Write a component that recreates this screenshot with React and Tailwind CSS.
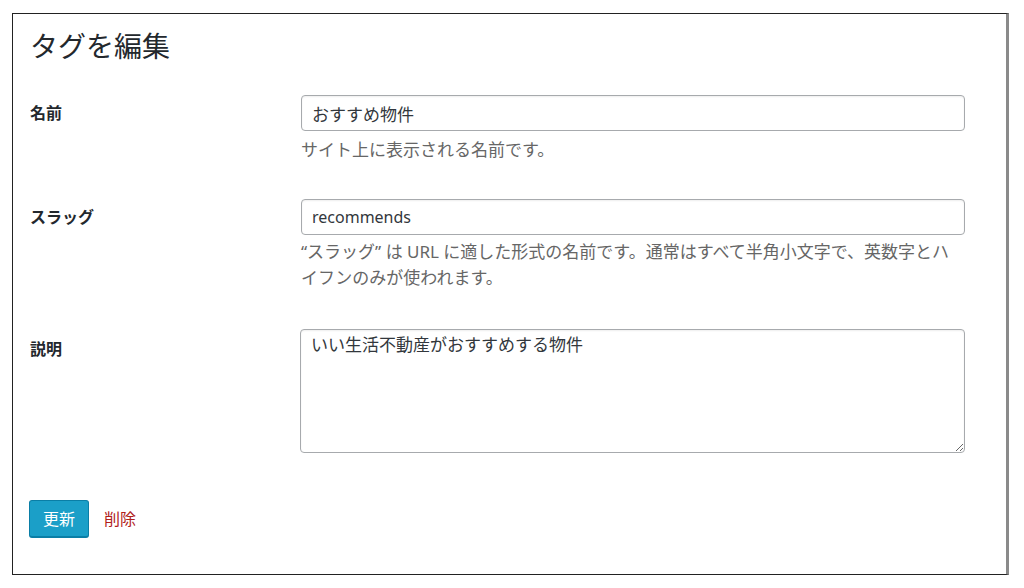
import React from "react";

const font = {
  fontFamily: '"Noto Sans", "Noto Sans CJK JP", sans-serif',
};

const Row = ({ label, children, labelClass = "" }) => (
  <div className="grid grid-cols-[271px_664px]">
    <div className={`text-[16px] font-bold text-[#23282d] ${labelClass}`}>
      {label}
    </div>
    <div>{children}</div>
  </div>
);

const App = () => {
  return (
    <div className="w-[1024px] h-[588px] bg-white pt-[13px] pl-[12px]" style={font}>
      <div className="w-[997px] h-[562px] border border-[#222] border-r-[3px] border-r-[#8a8a8a] pl-[17px]">
        <h1 className="mt-[14px] h-[36px] leading-[36px] text-[28px] font-normal text-[#23282d]">
          タグを編集
        </h1>

        <div className="mt-[31px]">
          <Row label="名前" labelClass="leading-[36px]">
            <input
              readOnly
              defaultValue="おすすめ物件"
              className="w-full h-[36px] px-[10px] rounded-[4px] border border-[#a7aaad] text-[17px] text-[#32373c] shadow-[inset_0_1px_2px_rgba(0,0,0,0.07)] outline-none"
            />
            <p className="mt-[6px] text-[17px] leading-[26px] text-[#666]">
              サイト上に表示される名前です。
            </p>
          </Row>
        </div>

        <div className="mt-[36px]">
          <Row label="スラッグ" labelClass="leading-[36px]">
            <input
              readOnly
              defaultValue="recommends"
              className="w-full h-[36px] px-[10px] rounded-[4px] border border-[#a7aaad] text-[16px] text-[#32373c] shadow-[inset_0_1px_2px_rgba(0,0,0,0.07)] outline-none"
            />
            <p className="mt-[4px] text-[17px] leading-[26px] text-[#666]">
              “スラッグ” は URL に適した形式の名前です。通常はすべて半角小文字で、英数字とハイフンのみが使われます。
            </p>
          </Row>
        </div>

        <div className="mt-[38px]">
          <Row label="説明" labelClass="pt-[8px] leading-[24px]">
            <textarea
              readOnly
              defaultValue="いい生活不動産がおすすめする物件"
              className="block -ml-[1px] w-[665px] h-[124px] px-[10px] py-[3px] rounded-[4px] border border-[#a7aaad] text-[17px] leading-[24px] text-[#32373c] shadow-[inset_0_1px_2px_rgba(0,0,0,0.07)] outline-none"
            />
          </Row>
        </div>

        <div className="mt-[47px] flex items-center gap-[15px]">
          <button className="-ml-[1px] w-[60px] h-[38px] rounded-[3px] bg-[#1b9fc8] border border-[#0a7ea6] border-b-[2px] text-[16px] text-white">
            更新
          </button>
          <a className="text-[16px] text-[#b0201a]">削除</a>
        </div>
      </div>
    </div>
  );
};

export default App;
